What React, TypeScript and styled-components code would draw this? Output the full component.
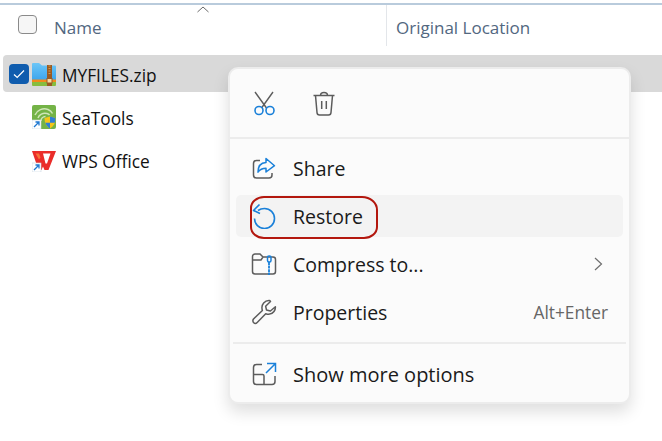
import React from 'react';
import styled, { createGlobalStyle } from 'styled-components';

const GlobalStyle = createGlobalStyle`
  html, body {
    margin: 0;
    padding: 0;
    background: #ffffff;
    overflow: hidden;
  }
  body {
    font-family: "Open Sans", "Noto Sans", "Liberation Sans", sans-serif;
  }
`;

const Page = styled.div`
  position: relative;
  width: 662px;
  height: 441px;
  padding-top: 3px;
  box-sizing: border-box;
  overflow: hidden;
`;

const TopLine = styled.div`
  height: 2px;
  background: #b9cbdc;
`;

const Header = styled.div`
  display: flex;
  height: 41px;
  margin-bottom: 9px;
`;

const NameColumn = styled.div`
  position: relative;
  flex: none;
  width: 368px;
  padding-left: 18px;
  padding-bottom: 3px;
  box-sizing: content-box;
  display: flex;
  align-items: center;
  gap: 17px;
  border-right: 1px solid #e3e6ea;
`;

const HeaderCheck = styled.span`
  width: 17px;
  height: 17px;
  border: 1px solid #8a8a8a;
  border-radius: 4px;
  background: #f6f6f6;
  flex: none;
`;

const ColumnTitle = styled.span`
  font-size: 17px;
  color: #52677f;
  padding-top: 6px;
`;

const SortCaret = styled.svg`
  position: absolute;
  left: 197px;
  top: 1px;
`;

const LocationColumn = styled.div`
  padding-left: 9px;
  padding-bottom: 3px;
  display: flex;
  align-items: center;
`;

const Rows = styled.div`
  display: flex;
  flex-direction: column;
  gap: 6px;
  margin-left: 3px;
`;

const Row = styled.div<{ $selected?: boolean }>`
  height: 37px;
  display: flex;
  align-items: center;
  padding-left: 6px;
  border-radius: 4px 0 0 4px;
  background: ${({ $selected }) => ($selected ? '#d9d9d9' : 'transparent')};
`;

const RowCheck = styled.span<{ $visible?: boolean }>`
  width: 20px;
  height: 20px;
  border-radius: 4px;
  background: #0f5cae;
  display: flex;
  align-items: center;
  justify-content: center;
  flex: none;
  margin-right: 3px;
  visibility: ${({ $visible }) => ($visible ? 'visible' : 'hidden')};
`;

const FileIcon = styled.svg`
  flex: none;
  margin-right: 6px;
`;

const FileName = styled.span`
  font-size: 17.3px;
  color: #111111;
  padding-top: 4px;
`;

const Menu = styled.div`
  position: absolute;
  left: 228px;
  top: 67px;
  width: 403px;
  height: 337px;
  box-sizing: border-box;
  background: #fbfbfb;
  border: 2px solid #ececec;
  border-radius: 10px;
  box-shadow: 0 8px 16px rgba(0, 0, 0, 0.13);
  display: flex;
  flex-direction: column;
`;

const ActionBar = styled.div`
  height: 68px;
  display: flex;
  align-items: center;
  padding-left: 21px;
  gap: 34px;
  flex: none;
`;

const FullDivider = styled.div`
  height: 2px;
  background: #ececec;
  flex: none;
`;

const InsetDivider = styled.div`
  height: 2px;
  margin: 6px 3px 0;
  background: #ececec;
  flex: none;
`;

const Items = styled.div<{ $top?: number }>`
  display: flex;
  flex-direction: column;
  padding: ${({ $top }) => $top ?? 5}px 6px 0;
`;

const Item = styled.div<{ $active?: boolean }>`
  height: 42px;
  margin: 3px 0;
  display: flex;
  align-items: center;
  padding: 0 15px;
  border-radius: 5px;
  background: ${({ $active }) => ($active ? '#f3f3f3' : 'transparent')};
`;

const ItemIcon = styled.svg`
  flex: none;
  margin-right: 16px;
`;

const ItemLabel = styled.span<{ $size?: number }>`
  font-size: ${({ $size }) => $size ?? 19.5}px;
  color: #1a1a1a;
  flex: 1;
`;

const Shortcut = styled.span`
  font-size: 17.3px;
  color: #666666;
`;

const Chevron = styled.svg`
  flex: none;
  margin-right: 5px;
`;

const Annotation = styled.div`
  position: absolute;
  left: 250px;
  top: 196px;
  width: 128px;
  height: 43px;
  box-sizing: border-box;
  border: 2px solid #b3170e;
  border-radius: 14px 16px 14px 14px / 12px 14px 12px 12px;
`;

const BLUE = '#1a80d9';
const GREY = '#5c5c5c';

const ZipIcon = () => (
  <FileIcon width="24" height="24" viewBox="0 0 24 24">
    <defs>
      <linearGradient id="zipBlue" x1="0" y1="0" x2="0" y2="1">
        <stop offset="0" stopColor="#6cc6f7" />
        <stop offset="1" stopColor="#3da5ec" />
      </linearGradient>
    </defs>
    <path d="M0 2a1 1 0 0 1 1-1h6l3 2.5h13a1 1 0 0 1 1 1V18H0z" fill="url(#zipBlue)" />
    <rect x="0" y="17.5" width="24" height="2.5" fill="#f28a1c" />
    <path d="M0 20h24v3a1 1 0 0 1-1 1H1a1 1 0 0 1-1-1z" fill="#86bd3f" />
    <rect x="15" y="3" width="5" height="21" fill="#9a5a22" />
    <path d="M16.500 4h2M16.500 6.500h2M16.500 9h2M16.500 11.500h2" stroke="#d49a4a" strokeWidth="1" />
    <rect x="15" y="16.500" width="5" height="4.500" fill="#f5d9a0" stroke="#9a5a22" strokeWidth="1" />
  </FileIcon>
);

const ShortcutBadge = () => (
  <g>
    <rect x="0" y="15" width="9" height="9" fill="#ffffff" stroke="#c9d6e2" strokeWidth="0.6" />
    <path d="M2 22l4.500-4.500M3.500 17h3.500v3.500" stroke="#1f78d1" strokeWidth="1.300" fill="none" />
  </g>
);

const SeaToolsIcon = () => (
  <FileIcon width="24" height="24" viewBox="0 0 24 24">
    <rect x="0" y="0" width="24" height="24" rx="2" fill="#74b347" />
    <path d="M3 10c2-5 8-7.500 13-5.500 2 .8 3.500 2 4.500 4M6 13c1-3.500 5-5.500 9-4.500 1 .3 2 .8 2.500 1.500M9 16c0-2.500 2-4.500 4.500-4.500" stroke="#cfe6b8" strokeWidth="1.500" fill="none" />
    <path d="M18 11.500l5.500 1.500c0 5-2 8.500-5.500 10.500-3.500-2-5.500-5.500-5.500-10.500z" fill="#f5c518" />
    <path d="M18 11.500l5.500 1.500c0 1.800-.3 3.400-.8 4.800H18zM18 17.800v5.700c-2.200-1.200-3.800-3.200-4.700-5.700z" fill="#2f7fd6" />
    <ShortcutBadge />
  </FileIcon>
);

const WpsIcon = () => (
  <FileIcon width="24" height="24" viewBox="0 0 24 24">
    <path d="M0 3h24l-7.500 19h-4L11 18.500 9.500 22h-3z" fill="#ea2d2a" />
    <path d="M11 5.500h7.500L15 15.500h-1.500z" fill="#ffffff" />
    <path d="M3.500 5.500h3.500l1.500 4-1.500 2z" fill="#f7743a" />
    <ShortcutBadge />
  </FileIcon>
);

const ScissorsIcon = () => (
  <svg width="26" height="26" viewBox="0 0 26 26" fill="none" strokeWidth="1.400">
    <path d="M4 2l11.500 16M22 2L10.500 18" stroke={GREY} />
    <circle cx="8" cy="20.500" r="4" stroke={BLUE} strokeWidth="1.600" />
    <circle cx="19" cy="20.500" r="4" stroke={BLUE} strokeWidth="1.600" />
  </svg>
);

const TrashIcon = () => (
  <svg width="26" height="26" viewBox="0 0 26 26" fill="none" stroke={GREY} strokeWidth="1.500">
    <path d="M2.500 5.500h21M9.500 5.500c0-2 1.200-3 3.500-3s3.500 1 3.500 3" />
    <path d="M4.500 5.500l1.500 17c.1 1.500 1 2.500 2.500 2.500h9c1.500 0 2.400-1 2.500-2.500l1.500-17" />
    <path d="M10.700 11v8M15.300 11v8" />
  </svg>
);

const ShareIcon = () => (
  <ItemIcon width="26" height="26" viewBox="0 0 26 26" fill="none" strokeWidth="1.500">
    <path d="M9 5.500H5.500a3 3 0 0 0-3 3V20a3 3 0 0 0 3 3H18a3 3 0 0 0 3-3v-2" stroke={GREY} />
    <path d="M15 3.500l8.500 7.200L15 17v-3.800c-3.500 0-6 1-8 4 0-6 3-9.500 8-9.700z" stroke={BLUE} strokeLinejoin="round" />
  </ItemIcon>
);

const RestoreIcon = () => (
  <ItemIcon width="26" height="26" viewBox="0 0 26 26" fill="none" stroke={BLUE} strokeWidth="1.600">
    <path d="M7 7.500C9 6 11 5.500 13.500 5.500a10 10 0 1 1-10 10" />
    <path d="M8.500 1.500L2.500 7.500l6.500 3" strokeLinejoin="round" />
  </ItemIcon>
);

const CompressIcon = () => (
  <ItemIcon width="26" height="26" viewBox="0 0 26 26" fill="none" strokeWidth="1.500">
    <path d="M1.500 5.500a2.500 2.500 0 0 1 2.500-2.500h5l3 3h10a2.500 2.500 0 0 1 2.500 2.500V20.500a2.500 2.500 0 0 1-2.500 2.500H4a2.500 2.500 0 0 1-2.500-2.500zM1.500 9h8.500l2-3" stroke={GREY} />
    <path d="M18 11v13" stroke={BLUE} strokeWidth="1.800" strokeDasharray="3 0.6" />
    <rect x="16.500" y="5" width="3.500" height="6" rx="1.500" stroke={BLUE} />
  </ItemIcon>
);

const WrenchIcon = () => (
  <ItemIcon width="26" height="26" viewBox="0 0 26 26" fill="none" stroke={GREY} strokeWidth="1.500" strokeLinejoin="round">
    <path d="M18 1.500a7 7 0 0 0-7 8c0 .8.2 1.500.4 2L2.500 20a3 3 0 0 0 0 3.500c1 1 2.700 1 3.700 0l8.500-8.800c3 1 6.500.3 8.300-2.200 1-1.400 1.500-3 1.400-4.800l-5 4.300-3.900-1-.9-3.800 4.900-4.700c-.3-.2-.3-1-1-1z" />
  </ItemIcon>
);

const MoreIcon = () => (
  <ItemIcon width="26" height="26" viewBox="0 0 26 26" fill="none" strokeWidth="1.500">
    <path d="M11 3.500H5.500a3 3 0 0 0-3 3V20.500a3 3 0 0 0 3 3H21a3 3 0 0 0 3-3V15" stroke={GREY} />
    <path d="M2.500 13.500h9a1.500 1.500 0 0 1 1.500 1.500v8.500" stroke={GREY} />
    <path d="M15 12l9-9M16 2.500h8.500V11" stroke={BLUE} />
  </ItemIcon>
);

const App: React.FC = () => {
  return (
    <Page>
      <GlobalStyle />
      <TopLine />
      <Header>
        <NameColumn>
          <HeaderCheck />
          <ColumnTitle>Name</ColumnTitle>
          <SortCaret width="12" height="7" viewBox="0 0 12 7" fill="none" stroke="#6a6a6a" strokeWidth="1">
            <path d="M0.500 6L6 1l5.500 5" />
          </SortCaret>
        </NameColumn>
        <LocationColumn>
          <ColumnTitle>Original Location</ColumnTitle>
        </LocationColumn>
      </Header>
      <Rows>
        <Row $selected>
          <RowCheck $visible>
            <svg width="12" height="10" viewBox="0 0 12 10" fill="none" stroke="#ffffff" strokeWidth="1.200">
              <path d="M1 5.500l3.200 3L11 1.500" />
            </svg>
          </RowCheck>
          <ZipIcon />
          <FileName>MYFILES.zip</FileName>
        </Row>
        <Row>
          <RowCheck />
          <SeaToolsIcon />
          <FileName>SeaTools</FileName>
        </Row>
        <Row>
          <RowCheck />
          <WpsIcon />
          <FileName>WPS Office</FileName>
        </Row>
      </Rows>
      <Menu>
        <ActionBar>
          <ScissorsIcon />
          <TrashIcon />
        </ActionBar>
        <FullDivider />
        <Items>
          <Item>
            <ShareIcon />
            <ItemLabel>Share</ItemLabel>
          </Item>
          <Item $active>
            <RestoreIcon />
            <ItemLabel>Restore</ItemLabel>
          </Item>
          <Item>
            <CompressIcon />
            <ItemLabel>Compress to...</ItemLabel>
            <Chevron width="9" height="14" viewBox="0 0 9 14" fill="none" stroke="#6e6e6e" strokeWidth="1.200">
              <path d="M1 1l6.500 6L1 13" />
            </Chevron>
          </Item>
          <Item>
            <WrenchIcon />
            <ItemLabel>Properties</ItemLabel>
            <Shortcut>Alt+Enter</Shortcut>
          </Item>
        </Items>
        <InsetDivider />
        <Items $top={6}>
          <Item>
            <MoreIcon />
            <ItemLabel $size={20}>Show more options</ItemLabel>
          </Item>
        </Items>
      </Menu>
      <Annotation />
    </Page>
  );
};

export default App;
